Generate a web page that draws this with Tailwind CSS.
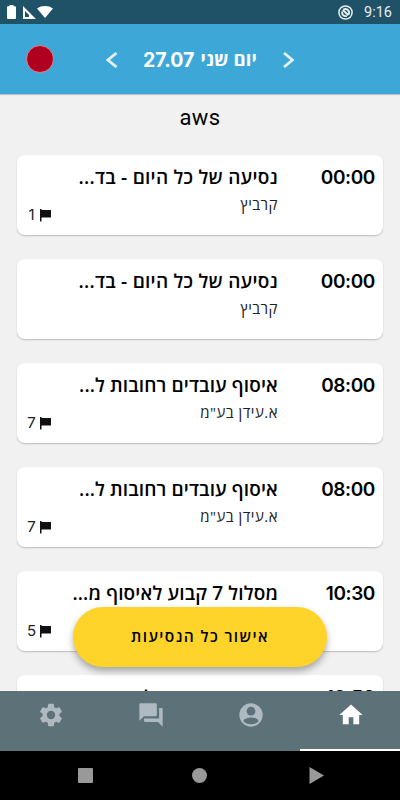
<!DOCTYPE html>
<html lang="he">
<head>
  <meta charset="UTF-8" />
  <meta name="viewport" content="width=device-width, initial-scale=1.0" />
  <title>נסיעות</title>
  <script src="https://cdn.jsdelivr.net/npm/@tailwindcss/browser@4"></script>
</head>
<body class="bg-[#f1f1f1] font-['Inter','Open_Sans',sans-serif] text-black">
  <div class="relative w-[400px] h-[800px] overflow-hidden flex flex-col">

    <!-- Status bar -->
    <div class="h-6 shrink-0 bg-[#1f5266] flex items-center justify-between pl-[7px] pr-2">
      <div class="flex items-center">
        <svg class="w-[9px] h-[14px]" viewBox="0 0 9 14"><path fill="#fff" d="M2.5 0h4v1.2H8A1 1 0 0 1 9 2.2V13a1 1 0 0 1-1 1H1a1 1 0 0 1-1-1V2.200a1 1 0 0 1 1-1h1.500z"/></svg>
        <svg class="w-[13px] h-[13px] ml-[7px]" viewBox="0 0 13 13"><path fill="#fff" fill-rule="evenodd" d="M0 0l13 13H0zM2 5v6h4V9z"/></svg>
        <svg class="w-[16px] h-[12px] ml-[1px]" viewBox="0 0 16 12"><path fill="#fff" d="M8 12L0 2.500C2.300.8 5 0 8 0s5.700.8 8 2.500z"/></svg>
      </div>
      <div class="flex items-center gap-[11px]">
        <svg class="w-[15px] h-[15px]" viewBox="0 0 15 15" fill="none" stroke="#e8edf0"><circle cx="7.500" cy="7.500" r="6.600" stroke-width="1.500"/><path stroke-width="1.900" d="M5.200 4.800a3.600 3.600 0 0 1 5.300 4.700M4.200 6.500a3.600 3.600 0 0 0 4.600 4.400M4.800 5l5.600 5.200"/></svg>
        <span class="font-['Roboto'] text-[14.5px] leading-6 text-[#e8edf0] pt-[2px]">9:16</span>
      </div>
    </div>

    <!-- Header -->
    <div class="h-[70px] shrink-0 bg-[#3da8d7] shadow-[0_1px_1px_rgba(0,0,0,0.2)] flex items-center pl-[26px]">
      <div class="w-7 h-7 rounded-full bg-[#b00020] border border-[#dc8597]"></div>
      <svg class="w-3 h-4 ml-[52px] mt-[1px]" viewBox="0 0 12 16" fill="none" stroke="#e6eeee" stroke-width="2.800"><path d="M10.500 1L2 8l8.500 7"/></svg>
      <h1 dir="rtl" class="w-[114px] ml-[25px] whitespace-nowrap flex justify-between items-center text-white font-bold leading-7">
        <span class="text-[18.5px] font-['Open_Sans'] tracking-[0.1px]">יום שני</span>
        <span class="text-[19.5px] mt-[2px]">27.07</span>
      </h1>
      <svg class="w-3 h-4 ml-[25px] mt-[1px]" viewBox="0 0 12 16" fill="none" stroke="#e6eeee" stroke-width="2.800"><path d="M2 1l8.500 7-8.500 7"/></svg>
    </div>

    <!-- Driver name -->
    <div class="h-[61px] shrink-0 text-center text-[22px] leading-[48px] font-['Roboto'] tracking-[0.4px]">aws</div>

    <!-- Trips -->
    <div id="trips" class="flex-1 min-h-0 overflow-hidden px-[17px] flex flex-col gap-6"></div>

    <!-- Approve all -->
    <button dir="rtl" class="absolute left-[73px] top-[607px] w-[254px] h-[60px] rounded-full bg-[#ffd42a] shadow-[0_4px_7px_rgba(0,0,0,0.32)] font-['Open_Sans'] font-semibold text-[15.5px] tracking-[1.4px] whitespace-nowrap">אישור כל הנסיעות</button>

    <!-- Tabs -->
    <div class="relative h-[60px] shrink-0 bg-[#5d7178] grid grid-cols-4 text-[#aebac0]">
      <div class="flex justify-center pt-[10px] pl-[1px]">
        <svg class="w-7 h-7" viewBox="0 0 24 24" fill="currentColor"><path d="M19.140 12.940c.04-.3.06-.61.06-.94 0-.32-.02-.64-.07-.94l2.030-1.580c.18-.14.23-.41.12-.61l-1.920-3.320c-.12-.22-.37-.29-.59-.22l-2.390.96c-.5-.38-1.030-.7-1.620-.94l-.36-2.540c-.04-.24-.24-.41-.48-.41h-3.840c-.24 0-.43.17-.47.41l-.36 2.540c-.59.24-1.130.57-1.620.94l-2.390-.96c-.22-.08-.47 0-.59.22L2.740 8.870c-.12.21-.08.47.12.61l2.030 1.580c-.05.3-.09.63-.09.94s.02.64.07.94l-2.030 1.580c-.18.14-.23.41-.12.61l1.920 3.320c.12.22.37.29.59.22l2.390-.96c.5.38 1.030.7 1.620.94l.36 2.540c.05.24.24.41.48.41h3.840c.24 0 .44-.17.47-.41l.36-2.540c.59-.24 1.130-.56 1.620-.94l2.390.96c.22.08.47 0 .59-.22l1.920-3.320c.12-.22.07-.47-.12-.61zM12 15.600A3.600 3.600 0 1 1 12 8.400a3.600 3.600 0 0 1 0 7.200z"/></svg>
      </div>
      <div class="flex justify-center pt-[10px] pl-[1px]">
        <svg class="w-7 h-7" viewBox="0 0 24 24" fill="currentColor"><path d="M21 6h-2v9H6v2c0 .55.45 1 1 1h11l4 4V7c0-.55-.45-1-1-1zm-4 6V3c0-.55-.45-1-1-1H3c-.55 0-1 .45-1 1v14l4-4h10c.55 0 1-.45 1-1z"/></svg>
      </div>
      <div class="flex justify-center pt-[10px] pl-[1px]">
        <svg class="w-7 h-7" viewBox="0 0 24 24"><circle cx="12" cy="12" r="10" fill="currentColor"/><circle cx="12" cy="8.700" r="3.700" fill="#5d7178"/><path fill="#5d7178" d="M5.500 17.200c0-2 4.300-3.100 6.500-3.100s6.500 1.100 6.500 3.100c-1.300 1.800-3.800 2.800-6.500 2.800s-5.200-1-6.500-2.800z"/></svg>
      </div>
      <div class="flex justify-center pt-[10px] pl-[1px] border-b-2 border-white text-white">
        <svg class="w-7 h-7" viewBox="0 0 24 24" fill="currentColor"><path d="M10 20v-6h4v6h5v-8h3L12 3 2 12h3v8z"/></svg>
      </div>
    </div>

    <!-- Android navigation -->
    <div class="h-[49px] shrink-0 bg-black flex items-center pl-[78px]">
      <div class="w-[15px] h-[15px] rounded-[1px] bg-[#999]"></div>
      <div class="w-[15px] h-[15px] rounded-full bg-[#999] ml-[99px]"></div>
      <svg class="w-[15px] h-[17px] ml-[102px]" viewBox="0 0 15 17"><path fill="#999" d="M.5 0L15 8.500.5 17z"/></svg>
    </div>
  </div>

  <script>
    const trips = [
      { time: "00:00", title: "נסיעה של כל היום - בד...", client: "קרביץ", flags: 1 },
      { time: "00:00", title: "נסיעה של כל היום - בד...", client: "קרביץ" },
      { time: "08:00", title: "איסוף עובדים רחובות ל...", client: "א.עידן בע\"מ", flags: 7, spacing: "tracking-[0.12px]" },
      { time: "08:00", title: "איסוף עובדים רחובות ל...", client: "א.עידן בע\"מ", flags: 7, spacing: "tracking-[0.12px]" },
      { time: "10:30", title: "מסלול 7 קבוע לאיסוף מ...", client: "", flags: 5, spacing: "tracking-[0.15px]" },
      { time: "10:50", title: "ל", client: "", spacing: "pr-[124px]" }
    ];

    const flag = `<svg class="w-[11px] h-[13px]" viewBox="0 0 11 13"><path fill="#111" d="M0 0h1.500v1H11v7.500H1.500V12.500H0z"/></svg>`;

    document.getElementById("trips").innerHTML = trips.map(t => `
      <div dir="rtl" class="relative h-20 shrink-0 rounded-[8px] bg-white shadow-[0_1px_1.5px_rgba(0,0,0,0.22)] pr-2">
        <div dir="ltr" class="text-right text-[19px] font-semibold leading-[46px] tracking-[-0.4px]">${t.time}</div>
        <div class="absolute right-[105px] top-0 whitespace-nowrap font-['Open_Sans']">
          <div class="text-[19px] font-semibold leading-[45px] ${t.spacing || "tracking-[0.25px]"}">${t.title}</div>
          <div class="text-[15px] leading-5 -mt-[6px] tracking-[0.5px] text-[#222]">${t.client}</div>
        </div>
        ${t.flags ? `<div dir="ltr" class="absolute left-[10px] bottom-[10px] flex items-center gap-1 text-[15px] leading-5 text-[#222]"><span class="w-[9px] text-center">${t.flags}</span>${flag}</div>` : ""}
      </div>`).join("");
  </script>
</body>
</html>
